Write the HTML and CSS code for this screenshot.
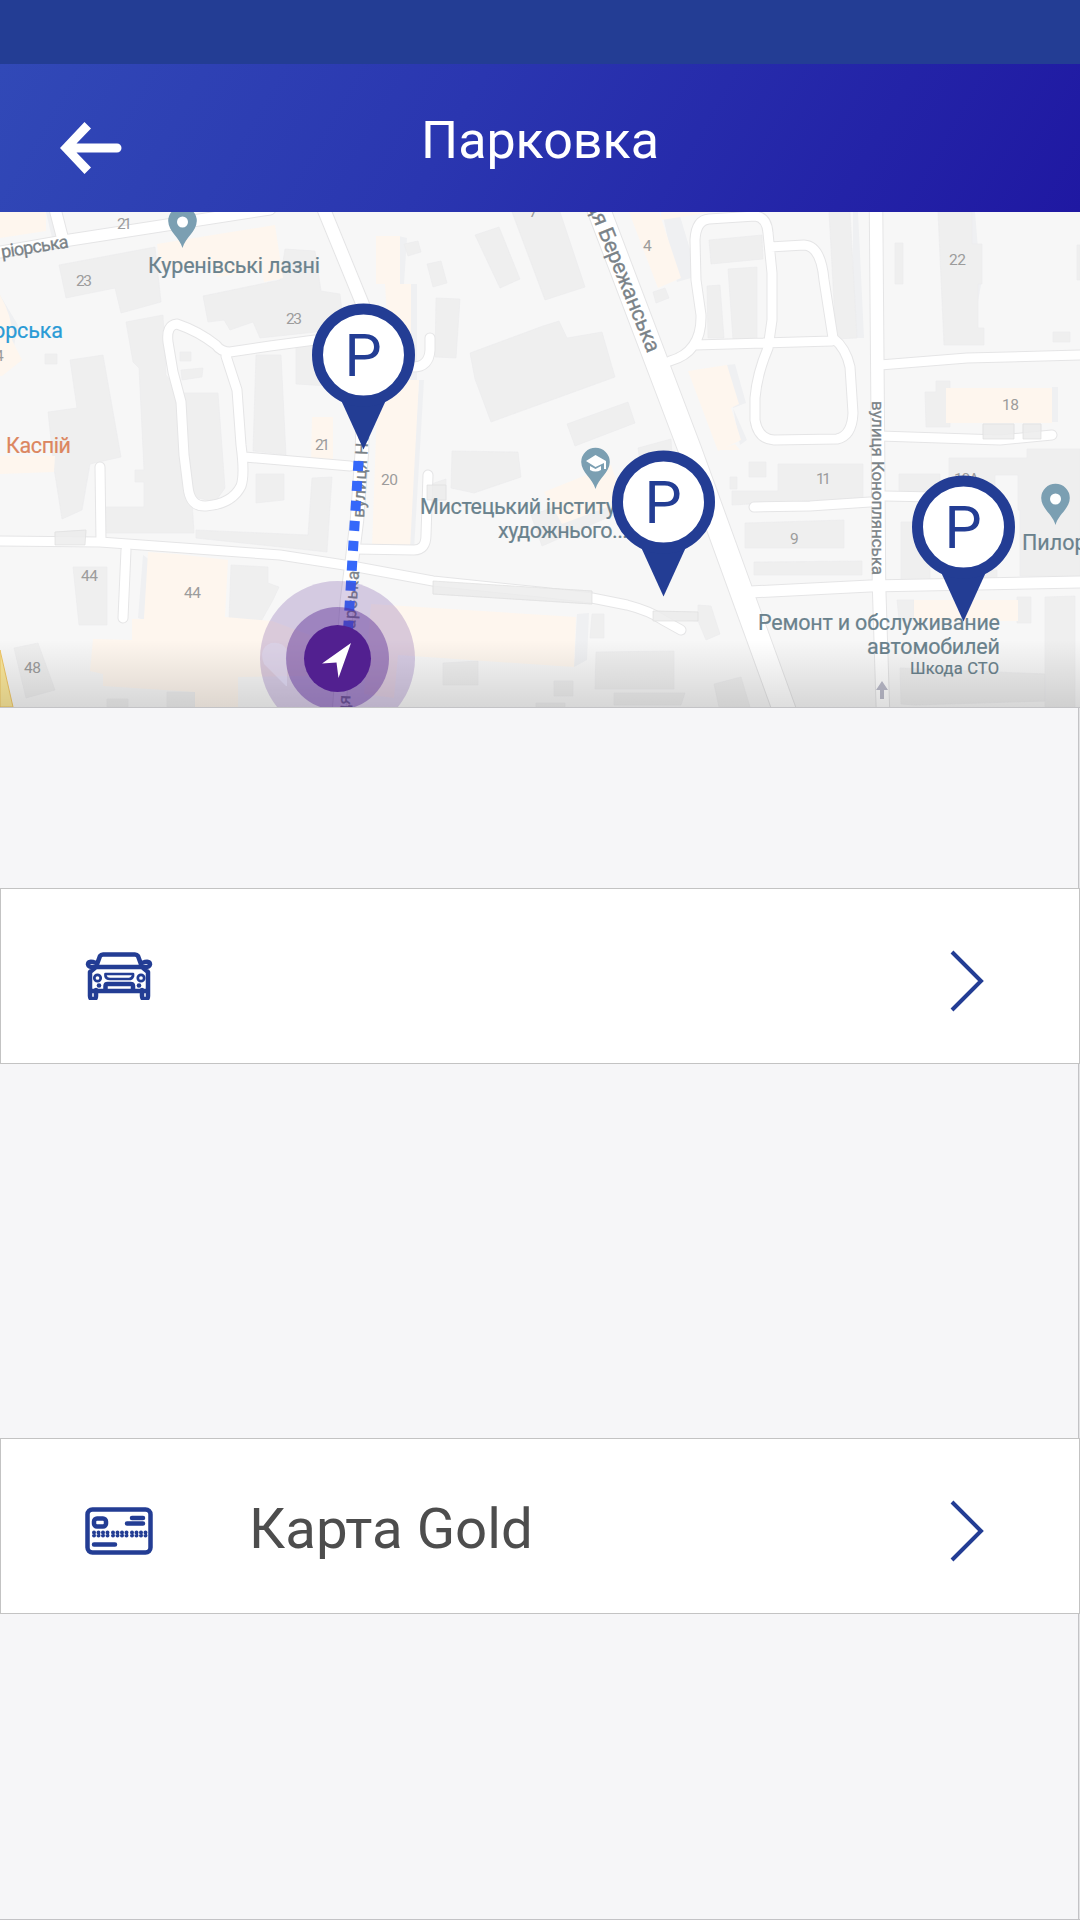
FILE: index.html
```html
<!DOCTYPE html>
<html lang="uk">
<head>
<meta charset="utf-8">
<title>Парковка</title>
<link rel="stylesheet" href="styles.css">
</head>
<body>
<div class="app">
  <div class="status-bar"></div>
  <header class="header">
    <svg class="back" viewBox="0 0 64 54" width="64" height="54"><path d="M0 27L24.500 1L31 7.500L16.500 22.500H57a4.500 4.500 0 0 1 0 9H16.500L31 46.500L24.500 53Z"/></svg>
    <h1 class="title">Парковка</h1>
  </header>
  <svg class="map" viewBox="0 212 1080 495" width="1080" height="495">
    <defs>
      <linearGradient id="fade" x1="0" y1="0" x2="0" y2="1"><stop offset="0" stop-color="#000" stop-opacity="0"/><stop offset="1" stop-color="#000" stop-opacity=".13"/></linearGradient>
      <g id="pin"><path class="pin-fill" d="M-23 44L0 94.500L23 44Z"/><circle class="pin-ring" r="46"/><text class="pin-letter" x="-19" y="21">P</text></g>
      <path id="poi" d="M0 25C-3 14-14 9-14.300-2A14.300 14.300 0 0 1 14.300-2C14 9 3 14 0 25Z"/>
      <g id="roads">
        <path class="r12" d="M0 252L70 240L270 209M54 205L63 240"/>
        <path class="r10" d="M315 340L270 346L230 352Q221 352 216 345Q198 331 177 324Q166 325 168 342L173 372L181 402L184 455L188 487Q190 507 206 506Q232 504 241 486Q245 475 241 445L237 390L226 356M245 457L350 466M100 467L101 541M126 550L123 618M428 475L426 535Q426 550 414 550L355 549M430 338V350Q429 367 413 367H380"/>
        <path class="r10" d="M0 541L100 542L280 555L357 567L433 581L540 592L592 598L627 605Q650 611 663 620L681 630"/>
        <path class="r13" d="M322 205L365 310L362 450L357 520L347 600L339 712"/>
        <path class="r23" d="M597 205L690 450L785 712"/>
        <path class="r10" d="M670 361Q702 352 701 315L696 280L695 240Q696 220 709 219L755 216Q767 217 768 233L772 273V320L768 348Q757 374 755 398V420Q758 439 774 440L837 439Q852 436 853 413L850 367Q846 348 833 338L824 280Q821 246 804 245L770 247M695 345L832 341"/>
        <path class="r13" d="M876 205L878 450L879 585L883 712"/>
        <path class="r10" d="M880 365L967 358L1080 355M880 436L1000 440L1052 435M754 507L810 506L870 502M885 496L935 497"/>
        <path class="r12" d="M750 592L870 586L1080 582"/>
      </g>
    </defs>
    <rect class="ground" y="212" width="1080" height="495"/>
    <g class="shade">
      <path d="M46 212H56L65 236L52 238ZM0 295L18 325L14 346L0 340ZM398 236L407 238L404 284H396ZM411 284H417V410H410ZM419 380H424L414 550H408ZM663 216H680L698 276L677 282ZM727 365L735 364L746 403L733 408ZM733 408L747 440L740 445ZM976 212H975L981 285L970 345H962V212ZM858 212L864 338H853V212ZM1052 387H1058V422H1052ZM577 614L589 613L587 660L574 667ZM143 555L150 560L144 620L138 618Z"/>
    </g>
    <g class="building">
      <path d="M59 265L155 247L161 302L121 313L115 288L66 298Z"/>
      <path d="M126 322L163 315L166 375L186 400L194 533H103V507H144V482H135V470H144L139 368L133 362Z"/>
      <path d="M70 360L103 355L121 457L90 464L82 510L62 519L54 468L48 412L77 408Z"/>
      <path d="M203 296L280 280L285 249L315 251L321 291L340 294L344 329L260 338L253 322L230 330L224 320L208 322Z"/>
      <path d="M181 393H218L225 488L215 502L194 497Z"/>
      <path d="M180 352H191V361H180ZM181 370L203 368L202 377L182 380ZM45 354H57V364H45ZM55 532L86 530L85 545H55Z"/>
      <path d="M256 355H281L286 455L253 451ZM296 345H328V386L296 384ZM256 474H284V500L256 503ZM312 478L332 477L327 552L196 538V530L308 535Z"/>
      <path d="M73 567H107V625H79ZM231 565L268 567V583L279 587L273 600L259 625L229 620ZM14 648L38 643L55 690L26 698ZM107 699H128V707H107ZM167 692H195V707H167Z"/>
      <path d="M404 244L418 241L421 252L408 256ZM427 264L441 261L447 283L433 287ZM475 235L499 227L520 279L500 288ZM436 298L460 299L456 358L435 357Z"/>
      <path d="M470 353L543 326L559 321L567 338L602 332L615 377L491 422L475 379ZM512 212H560L585 287L545 300Z"/>
      <path d="M567 424L628 402L635 423L575 446ZM638 448L671 439L673 468L641 470ZM452 451L518 452L521 477L474 493L451 488ZM531 515L620 485L625 510L542 546ZM428 485L446 479V500H428Z"/>
      <path d="M433 581L592 591V604L433 594ZM653 611L698 612V605L711 606L720 634L706 640L698 621L653 617ZM592 614H604V638H590ZM596 652L674 651V689H595ZM614 693L685 693L681 705H614ZM554 681H573V696H554ZM714 684L741 677L750 707H719Z"/>
      <path d="M709 240L762 235L763 259L711 264ZM728 269L757 267V340H733ZM707 286L720 285L724 338H708ZM653 292L665 288L669 298L656 303Z"/>
      <path d="M829 212H850L857 338L836 339ZM895 243H903V284H895ZM938 212H972V244H982V284H978V328H984V345H944ZM1053 332H1070V342H1053ZM1077 245H1080V280H1077Z"/>
      <path d="M925 392H936V381H950V427H926ZM983 424H1014V439H983ZM1023 424H1041V439H1023Z"/>
      <path d="M732 491H778V464H863V498L732 505ZM749 462H766V477H749ZM730 477H737V489H730ZM745 523L844 520V548H745ZM754 562L862 561V575H754ZM899 474H940V498H899ZM949 458H1027V449H1080V576H1020V510H1018V475H995V500H949ZM901 522H930V582H901ZM943 570L997 570V585H943ZM897 600H914V620H899ZM1017 597H1031V623H1017ZM1045 597L1075 596V707H1045ZM900 668L1045 674V701L915 705L901 704ZM443 663L478 661V685H443ZM536 703H565V707H536Z"/>
    </g>
    <g class="cream">
      <path d="M0 212H46V231L0 238ZM157 244L275 225L283 278L264 282L262 270L217 277L216 264L160 270ZM0 295Q14 320 12 340L22 360L2 376H0ZM0 456H55L54 472L0 474Z"/>
      <path d="M376 236H400V284H411V342L390 360L385 284H376ZM378 380H419L410 549L372 547ZM312 417H333V466H311Z"/>
      <path d="M148 552L177 554L228 560L225 617L272 621L310 635L309 676L238 677V707H195V692L103 686V674L90 671L93 639L132 640V619H144Z"/>
      <path d="M371 604L576 617L574 667L398 655L394 698L364 694Z"/>
      <path d="M629 212H659L681 278L658 288ZM661 220L713 212H661ZM688 371L727 365L739 404L731 408L741 440L718 451ZM544 492L611 465L617 483L610 506L562 524ZM946 388H1052V423H946ZM914 600H1018V621H914ZM718 450L735 444L740 450Z"/>
    </g>
    <use class="casing" href="#roads"/>
    <use class="road" href="#roads"/>
    <g class="overlay"><path d="M55 532L86 530L85 545H55ZM433 581L592 591V604L433 594ZM653 611L698 612V621H653ZM983 424H1014V439H983ZM1023 424H1041V439H1023ZM427 485H446V500H427Z"/></g>
    <path class="yellow" d="M0 650L13 707H0Z"/>
    <path class="arrow-up" d="M882 681L888 690H884V699H880V690H876Z"/>

    <g class="poi"><use href="#poi" x="182.500" y="223"/><use href="#poi" x="595.500" y="464"/><use href="#poi" x="1055.500" y="500"/></g>
    <circle class="white" cx="182.500" cy="222" r="5.500"/><circle class="white" cx="1055.500" cy="499" r="5.500"/>
    <path class="white" d="M586 461L595.500 455L606 461V469H604V463L595.500 467ZM590 466L595.500 469L601 466V470Q595.500 473 590 470Z"/>

    <g class="num">
      <text x="117" y="229" textLength="15">21</text><text x="76" y="286" textLength="16">23</text><text x="286" y="324" textLength="16">23</text><text x="315" y="450" textLength="15">21</text><text x="381" y="485" textLength="17">20</text><text x="643" y="251">4</text><text x="949" y="265" textLength="17">22</text><text x="1002" y="410" textLength="17">18</text><text x="816" y="484" textLength="15">11</text><text x="790" y="544">9</text><text x="954" y="484" textLength="25">10A</text><text x="81" y="581" textLength="17">44</text><text x="184" y="598" textLength="17">44</text><text x="24" y="673" textLength="17">48</text><text x="-5" y="361">4</text><text x="529" y="217">7</text>
    </g>
    <g class="place">
      <text x="148" y="273" textLength="172">Куренівські лазні</text>
      <text x="420" y="514" textLength="206">Мистецький інститут</text>
      <text x="498" y="538" textLength="130">художнього...</text>
      <text x="758" y="630" textLength="242">Ремонт и обслуживание</text>
      <text x="867" y="654" textLength="133">автомобилей</text>
      <text class="small" x="910" y="674" textLength="89">Шкода СТО</text>
      <text x="1022" y="550">Пилорама</text>
      <text class="transit" x="-7" y="338" textLength="70">орська</text>
      <text class="food" x="6" y="453" textLength="65">Каспій</text>
    </g>
    <g class="street">
      <text class="mid" transform="translate(2 258) rotate(-9)" textLength="68">ріорська</text>
      <text class="big" transform="translate(570 162) rotate(68)" textLength="207">вулиця Бережанська</text>
      <text transform="translate(872 401) rotate(90)" textLength="174">вулиця Коноплянська</text>
      <text transform="translate(364 518) rotate(-87)" textLength="85">вулиця Но</text>
      <text transform="translate(355 629) rotate(-86)" textLength="58">арська</text>
      <text transform="translate(349 715) rotate(-86)">ця</text>
    </g>
    <path class="route" d="M358.500 461L348 631"/>
    <rect y="640" width="1080" height="67" fill="url(#fade)"/>
    <circle class="halo" cx="337.500" cy="658.500" r="77.500"/>
    <path class="heart" d="M286 686L264 664Q258 648 271 643Q282 641 287 650V686Z"/>
    <circle class="halo-mid" cx="337.500" cy="658.500" r="51.500"/>
    <circle class="me" cx="337.500" cy="658.500" r="33.500"/>
    <path class="white" d="M351 643L322 663.500L336.500 662.500L338.500 678Z"/>
    <use href="#pin" x="363.500" y="355"/><use href="#pin" x="663.500" y="502"/><use href="#pin" x="963.500" y="527"/>
  </svg>
  <main class="panel">
    <div class="row">
      <svg class="icon" viewBox="0 0 68 48" width="68" height="48">
        <path d="M11 15L15 4Q16 2.500 18 2.500H50Q52 2.500 53 4L57 15H11L5 20V39H63V20L57 15M11 11Q3 8 3 12.500Q4 16 10 15M57 11Q65 8 65 12.500Q64 16 58 15M5 38V44Q5 47 7.500 47H9Q11 47 11 44V38M57 38V44Q57 47 59.500 47H61Q63 47 63 44V38M20.500 39V34Q20.500 32 22.500 32H45.500Q48 32 48 34V39"/>
        <path class="thin" d="M20.500 22H48V24Q47 27 44 27H25Q21 27 20.500 24Z"/><circle class="thin" cx="12.500" cy="26" r="3.200"/><circle class="thin" cx="56" cy="26" r="3.200"/><circle class="dot" cx="14" cy="33.500" r="2.300"/><circle class="dot" cx="54" cy="33.500" r="2.300"/>
      </svg>
      <span class="label"></span>
      <svg class="chevron" viewBox="0 0 34 62" width="34" height="62"><path d="M2 2L31 31L2 60"/></svg>
    </div>
    <div class="row">
      <svg class="icon card" viewBox="0 0 68 48" width="68" height="48">
        <rect x="2.500" y="2.500" width="63" height="43" rx="5"/>
        <rect x="9" y="11.500" width="12" height="8" rx="3"/>
        <path d="M47 11H58M42 16.500H58M9 37.500H30"/><path class="beads" d="M9 25.500H22.600M28 25.500H41.600M47 25.500H60.600M9 28.500H22.600M28 28.500H41.600M47 28.500H60.600"/>
      </svg>
      <span class="label">Карта Gold</span>
      <svg class="chevron" viewBox="0 0 34 62" width="34" height="62"><path d="M2 2L31 31L2 60"/></svg>
    </div>
  </main>
</div>
</body>
</html>
```
FILE: styles.css
```css
* { box-sizing: border-box; }
body { margin: 0; font-family: Roboto, sans-serif; }
.app { width: 1080px; height: 1920px; display: flex; flex-direction: column; overflow: hidden; background: #f6f6f8; }
.status-bar { height: 64px; background: #233d94; }
.header { height: 148px; display: grid; grid-template-columns: 60px 1fr 60px; align-items: start; background: linear-gradient(120deg, #3149b7 0%, #2a36b0 42%, #1f18a2 100%); }
.back { grid-area: 1 / 2; margin-top: 57px; fill: #fff; }
.title { grid-area: 1 / 1 / 2 / 4; justify-self: center; margin: 47px 0 0; color: #fff; font-size: 52px; line-height: 60px; font-weight: 400; }
.map { display: block; flex: none; }

.ground { fill: #f7f7f7; }
.shade { fill: #eff0f2; }
.building { fill: #efefef; stroke: #ebebed; stroke-width: .6; }
.cream { fill: #fef6ee; }
.casing, .road { fill: none; stroke-linecap: round; stroke-linejoin: round; }
.casing { stroke: #e5e5e6; --edge: 2px; }
.road { stroke: #fff; --edge: 0px; }
.r10 { stroke-width: calc(9px + var(--edge)); }
.r12 { stroke-width: calc(11px + var(--edge)); }
.r13 { stroke-width: calc(12.5px + var(--edge)); }
.r23 { stroke-width: calc(22.5px + var(--edge)); }
.overlay { fill: #ececec; fill-opacity: .85; stroke: #dfdfdf; stroke-width: .7; }
.yellow { fill: #fbe89b; stroke: #efc667; }
.arrow-up { fill: #bcbccb; }
.poi { fill: #7b9fb2; }
.white { fill: #fff; }
.num { fill: #9c9c9c; font-size: 15.500px; }
.place { fill: #6a828d; font-size: 21.500px; font-weight: 400; stroke: #6a828d; stroke-width: .2; }
.place .small { font-size: 16.500px; }
.place .transit { fill: #2a9bd6; stroke: #2a9bd6; }
.place .food { fill: #dc8660; stroke: #dc8660; }
.street { fill: #7b8388; font-size: 17px; stroke: #7b8388; stroke-width: .3; }
.street .mid { font-size: 18px; }
.street .big { font-size: 21.500px; }
.route { fill: none; stroke: #3568fa; stroke-width: 10px; stroke-dasharray: 10 10; }
.halo { fill: #542492; fill-opacity: .21; }
.halo-mid { fill: #542492; fill-opacity: .42; }
.me { fill: #522090; }
.heart { fill: #dcdcf5; fill-opacity: .4; }
.pin-fill { fill: #233d94; }
.pin-ring { fill: #fff; stroke: #233d94; stroke-width: 11px; }
.pin-letter { fill: #233d94; font-size: 59px; }

.panel { flex: 1; display: flex; flex-direction: column; gap: 374px; padding-top: 180px; border-top: 1px solid #c3c3c6; border-bottom: 1px solid #c3c3c6; background: linear-gradient(to right, transparent 1078px, #c3c3c6 1078px, #c3c3c6 1079px, #e4e4e6 1079px); }
.row { height: 176px; flex: none; display: flex; align-items: center; padding: 0 95px 0 84px; background: #fff; border: 1px solid #c3c3c3; }
.icon { flex: none; fill: none; stroke: #233d94; stroke-width: 4.500; stroke-linecap: round; stroke-linejoin: round; }
.icon .thin { stroke-width: 2.700; }
.icon .dot { fill: #233d94; stroke: none; }
.icon .beads { stroke-width: 4; stroke-dasharray: 0 4.500; }
.icon.card { margin-top: 9px; }
.label { flex: 1; margin: 5px 0 0 96px; font-size: 56.400px; line-height: 66px; color: #4d4d4d; }
.chevron { flex: none; margin-top: 10px; fill: none; stroke: #233d94; stroke-width: 4; }
```
